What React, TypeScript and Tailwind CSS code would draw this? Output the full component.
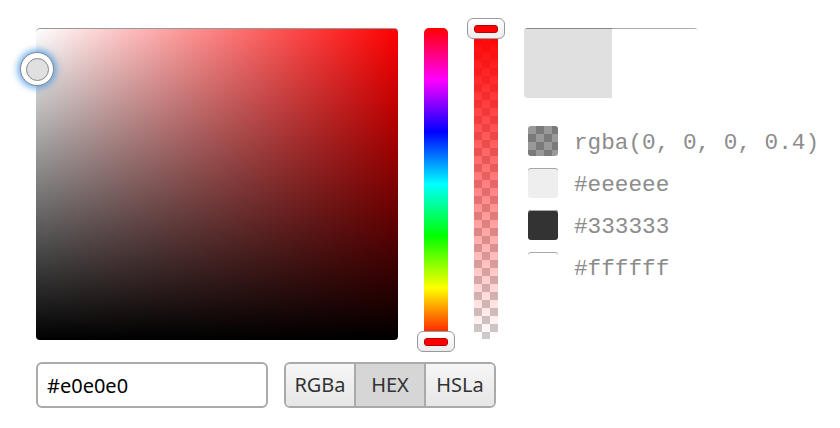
import { useState } from 'react';

const checker =
  'bg-[conic-gradient(#cccccc_25%,#ffffff_0_50%,#cccccc_0_75%,#ffffff_0)] bg-[length:16px_16px]';

const swatches = [
  { label: 'rgba(0, 0, 0, 0.4)', kind: 'alpha' },
  { label: '#eeeeee', kind: 'eee' },
  { label: '#333333', kind: '333' },
  { label: '#ffffff', kind: 'fff' },
];

const Swatch = ({ kind }: { kind: string }) => {
  if (kind === 'alpha') {
    return (
      <div className={`w-[30px] h-[30px] rounded-[3px] overflow-hidden ${checker}`}>
        <div className="w-full h-full bg-black/40" />
      </div>
    );
  }
  const bg = kind === 'eee' ? 'bg-[#eeeeee]' : kind === '333' ? 'bg-[#333333]' : 'bg-white';
  return (
    <div
      className={`w-[30px] h-[30px] rounded-[3px] ${bg} shadow-[inset_0_1px_0_#a8a8a8]`}
    />
  );
};

export default function App() {
  const [mode, setMode] = useState('HEX');
  const [value, setValue] = useState('#e0e0e0');

  return (
    <div className="w-[840px] h-[428px] bg-white pl-[36px] pt-[28px] font-['Noto_Sans',sans-serif] overflow-hidden">
      <div className="flex">
        {/* saturation / value area */}
        <div className="relative w-[362px] h-[312px] rounded-[4px] bg-[linear-gradient(to_bottom,transparent,#000),linear-gradient(to_right,#fff,#f00)] shadow-[inset_0_1px_0_#999]">
          <div className="absolute left-[-16px] top-[24px] w-[34px] h-[34px] rounded-full bg-white border border-[#8a8a8a] shadow-[0_0_7px_2px_rgba(66,150,230,0.85)] flex items-center justify-center">
            <div className="w-[23px] h-[23px] rounded-full bg-[#e0e0e0] border border-[#888]" />
          </div>
        </div>

        {/* hue slider */}
        <div className="relative ml-[26px] w-[24px] h-[312px] rounded-[5px] bg-[linear-gradient(to_bottom,#f00,#f0f,#00f,#0ff,#0f0,#ff0,#f00)]">
          <div className="absolute left-[-7px] top-[303px] w-[38px] h-[21px] rounded-[6px] bg-[linear-gradient(#ffffff,#ececec)] border border-[#999] flex items-center justify-center">
            <div className="w-[24px] h-[8px] rounded-[3px] bg-[#ff0000] border border-[#b00]" />
          </div>
        </div>

        {/* alpha slider */}
        <div className={`relative ml-[26px] w-[24px] h-[311px] rounded-[5px] ${checker}`}>
          <div className="w-full h-full rounded-[5px] bg-[linear-gradient(to_bottom,#ff0000,transparent)]" />
          <div className="absolute left-[-7px] top-[-10px] w-[38px] h-[21px] rounded-[6px] bg-[linear-gradient(#ffffff,#ececec)] border border-[#999] flex items-center justify-center">
            <div className="w-[24px] h-[8px] rounded-[3px] bg-[#ff0000] border border-[#b00]" />
          </div>
        </div>

        {/* preview + swatches */}
        <div className="ml-[26px] flex flex-col">
          <div className="w-[174px] h-[70px] rounded-[4px] overflow-hidden flex shadow-[inset_0_1px_0_#999]">
            <div className="w-[88px] h-full bg-[#e0e0e0] shadow-[inset_0_1px_0_#888]" />
            <div className="flex-1 h-full bg-white shadow-[inset_0_1px_0_#aaa]" />
          </div>
          <div className="mt-[28px] ml-[4px] flex flex-col gap-[12px]">
            {swatches.map((s) => (
              <div key={s.label} className="flex items-center gap-[16px] h-[30px]">
                <Swatch kind={s.kind} />
                <span className="pt-[4px] font-['Liberation_Mono',monospace] text-[22.7px] leading-none text-[#8c8c8c] whitespace-nowrap">
                  {s.label}
                </span>
              </div>
            ))}
          </div>
        </div>
      </div>

      <div className="flex mt-[22px] gap-[16px]">
        <input
          value={value}
          onChange={(e) => setValue(e.target.value)}
          className="w-[232px] h-[46px] border-2 border-[#aaaaaa] rounded-[6px] px-[9px] text-[20px] text-black outline-none font-['Noto_Sans',sans-serif]"
        />
        <div className="flex h-[46px] w-[212px] border-2 border-[#aaaaaa] rounded-[6px] overflow-hidden">
          {['RGBa', 'HEX', 'HSLa'].map((m, i) => (
            <button
              key={m}
              onClick={() => setMode(m)}
              className={`flex-1 text-[20px] text-[#333] ${i > 0 ? 'border-l-2 border-[#aaaaaa]' : ''} ${
                mode === m ? 'bg-[#d6d6d6]' : 'bg-[linear-gradient(#f6f6f6,#e6e6e6)]'
              }`}
            >
              {m}
            </button>
          ))}
        </div>
      </div>
    </div>
  );
}
